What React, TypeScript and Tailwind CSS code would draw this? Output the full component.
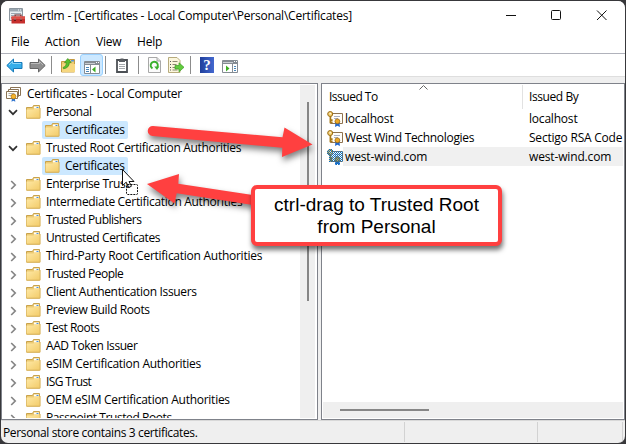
import React from "react";

const tree: { label: string; level: number; state: "open" | "closed" | "leaf"; track: string }[] = [
  { label: "Personal", level: 0, state: "open", track: "tracking-[-0.42px]" },
  { label: "Certificates", level: 1, state: "leaf", track: "tracking-[-0.25px]" },
  { label: "Trusted Root Certification Authorities", level: 0, state: "open", track: "tracking-[-0.335px]" },
  { label: "Certificates", level: 1, state: "leaf", track: "tracking-[-0.25px]" },
  { label: "Enterprise Trust", level: 0, state: "closed", track: "tracking-[-0.4px]" },
  { label: "Intermediate Certification Authorities", level: 0, state: "closed", track: "tracking-[-0.31px]" },
  { label: "Trusted Publishers", level: 0, state: "closed", track: "tracking-[-0.5px]" },
  { label: "Untrusted Certificates", level: 0, state: "closed", track: "tracking-[-0.38px]" },
  { label: "Third-Party Root Certification Authorities", level: 0, state: "closed", track: "tracking-[-0.26px]" },
  { label: "Trusted People", level: 0, state: "closed", track: "tracking-[-0.5px]" },
  { label: "Client Authentication Issuers", level: 0, state: "closed", track: "tracking-[-0.32px]" },
  { label: "Preview Build Roots", level: 0, state: "closed", track: "tracking-[-0.36px]" },
  { label: "Test Roots", level: 0, state: "closed", track: "tracking-[-0.5px]" },
  { label: "AAD Token Issuer", level: 0, state: "closed", track: "tracking-[-0.42px]" },
  { label: "eSIM Certification Authorities", level: 0, state: "closed", track: "tracking-[-0.27px]" },
  { label: "ISG Trust", level: 0, state: "closed", track: "tracking-[-0.6px]" },
  { label: "OEM eSIM Certification Authorities", level: 0, state: "closed", track: "tracking-[-0.27px]" },
  { label: "Passpoint Trusted Roots", level: 0, state: "closed", track: "tracking-[-0.43px]" },
];

const certs = [
  { to: "localhost", by: "localhost", toTrack: "tracking-[-0.2px]", byTrack: "tracking-[-0.2px]" },
  { to: "West Wind Technologies", by: "Sectigo RSA Code", toTrack: "tracking-[-0.32px]", byTrack: "tracking-[-0.22px]" },
  { to: "west-wind.com", by: "west-wind.com", toTrack: "tracking-[-0.15px]", byTrack: "tracking-[-0.15px]" },
];

function Folder() {
  return (
    <svg width="15" height="14" viewBox="0 0 15 14" className="shrink-0">
      <defs>
        <linearGradient id="folder" x1="0" y1="0" x2="1" y2="1">
          <stop offset="0" stopColor="#ffe9a6" />
          <stop offset="1" stopColor="#f2cb68" />
        </linearGradient>
      </defs>
      <path d="M.5 13V2.5h6l1-2h6v12.5z" fill="#eccb75" stroke="#c9a24b" />
      <path d="M8 1.5h5v2H8z" fill="#fff" />
      <path d="M10.5 2h2v1h-2z" fill="#4a90d9" />
      <path d="M.5 13.2V4.5h7l1-1h5.5v9.7z" fill="url(#folder)" />
      <path d="M.5 13.2h13.6V3" fill="none" stroke="#d8b35c" />
    </svg>
  );
}

function Chevron({ open }: { open: boolean }) {
  return (
    <svg width="12" height="12" viewBox="0 0 12 12" className="shrink-0" fill="none" strokeWidth="1.7">
      {open ? <path d="M2 4.2 6 8.2 10 4.2" stroke="#303030" /> : <path d="M4.2 3 8.2 7 4.2 11" stroke="#858585" />}
    </svg>
  );
}

function CertStack() {
  return (
    <svg width="16" height="16" viewBox="0 0 16 16" className="shrink-0">
      <path d="M4.5 1.5h10v8h-10z" fill="#fff" stroke="#8a7354" />
      <path d="M2.5 3.5h10v7h-10z" fill="#fff" stroke="#8a7354" />
      <path d="M.5 5.5h11v7H.5z" fill="#fffdf6" stroke="#8a7354" />
      <path d="M2.5 7.5h6M2.5 9.5h3" stroke="#aaa" />
      <path d="m6 12-.5 3.8 1.900-1 1.900 1L8.800 12z" fill="#2f74cf" />
      <circle cx="7.500" cy="10.500" r="2.400" fill="#f5b32b" stroke="#b77b12" strokeWidth=".8" />
    </svg>
  );
}

function CertKey({ dim = false }: { dim?: boolean }) {
  return (
    <svg width="16" height="16" viewBox="0 0 16 16" className="shrink-0">
      <defs>
        <pattern id="dither" width="2" height="2" patternUnits="userSpaceOnUse">
          <path d="M0 0h1v1H0zM1 1h1v1H1z" fill="#0b70c0" />
        </pattern>
      </defs>
      <path d="M3.5 2.5h12v10h-12z" fill="#fffdf8" stroke="#8f7350" />
      <path d="M7 5.5h6M7 7.5h4" stroke="#aab0c4" />
      <path d="m8.5 11-.5 5 2.4-1.3L13 16l-.7-5z" fill="#2468cc" />
      <circle cx="10.4" cy="10.3" r="2.4" fill="#eda824" stroke="#9d6a10" strokeWidth=".8" />
      <path d="M3.4 4v8.2M3.4 9.2h2.2M3.4 11.4h2.2" stroke="#a87818" strokeWidth="1.7" fill="none" />
      <circle cx="3.2" cy="3" r="2.5" fill="#f4cf70" stroke="#9a6d19" />
      <path d="M2.6 2h1.2v1.2H2.6z" fill="#fff" />
      {dim && <path d="M1 0h4v1h1v1h10v11h-3v3H8v-3H2V6H0V1h1z" fill="url(#dither)" />}
    </svg>
  );
}

function AppIcon() {
  return (
    <svg width="16" height="16" viewBox="0 0 16 16" className="shrink-0">
      <path d="M.5.5h13v12H.5z" fill="#e8eef3" stroke="#8b969f" />
      <path d="M1 1h12v2.5H1z" fill="#9aa7b1" />
      <path d="M9 2h1M11 2h1" stroke="#fff" />
      <path d="M2 5.5h10M2 7.5h3M2 9.5h1" stroke="#9aa7b1" />
      <path d="M6 8.500V7h6v1.500" fill="none" stroke="#6c2020" strokeWidth="1.2" />
      <path d="M2.500 8.500H16v7H2.500z" fill="#c62f2d" />
      <path d="M2.500 8.500H16V11H2.500z" fill="#dd5048" />
      <path d="M5 10.500h2V13H5zM11 10.500h2V13h-2z" fill="#701717" />
      <path d="M5.500 10.500h1v1h-1zM11.500 10.500h1v1h-1z" fill="#fff" />
    </svg>
  );
}

function ArrowIcon({ back = false }: { back?: boolean }) {
  return (
    <svg width="17" height="15" viewBox="0 0 17 15" className="shrink-0">
      {back ? (
        <>
          <path d="M.8 7.5 7.5 1v3.5H16v6H7.5V14z" fill="#35aeea" stroke="#1779b8" />
          <path d="M3 7 6.5 3.5v2H15" fill="none" stroke="#8bd6f8" />
        </>
      ) : (
        <>
          <path d="M16.2 7.5 9.5 1v3.5H1v6h8.5V14z" fill="#8e8e8e" stroke="#666" />
          <path d="M2 5.5h8.5v-2L14 7" fill="none" stroke="#bababa" />
        </>
      )}
    </svg>
  );
}

function UpFolder() {
  return (
    <svg width="15" height="16" viewBox="0 0 15 16" className="shrink-0">
      <path d="M.5 15V4.500h7l1-2h5V15z" fill="#edcb72" stroke="#c49b43" />
      <path d="M1 7h13v8H1z" fill="#f6d780" />
      <path d="M10 3h3v1.500h-3z" fill="#5798d6" />
      <path d="M2 10.500C4.500 9.500 5.300 8 5.300 5.500H3.500L6.800 1.500l3.400 4H8.300c0 3.500-2 5.800-5.800 6.300z" fill="#58c02e" stroke="#3b8f1d" strokeWidth=".7" />
    </svg>
  );
}

function PaneIcon({ right = false }: { right?: boolean }) {
  return (
    <svg width="16" height="13" viewBox="0 0 16 13" className="shrink-0">
      <path d="M.5.5h15v12H.5z" fill="#fff" stroke="#858c93" />
      <path d="M1 1h14v3H1z" fill="#858c93" />
      <path d="M1 2.5h10" stroke="#c9cdd1" />
      <path d="M12 1.5h1M14 1.5h1" stroke="#fff" />
      {right ? (
        <>
          <path d="M10.5 4v8" stroke="#858c93" />
          <path d="M12 6.5h2M12 8.5h2M12 10.5h2" stroke="#4a87b8" />
          <path d="M4 5.5v6L7.5 8.5z" fill="#3cae20" />
        </>
      ) : (
        <>
          <path d="M6.5 4v8" stroke="#858c93" />
          <path d="M2 6.5h3M2 8.5h3M2 10.5h3" stroke="#4a87b8" />
          <path d="M11.5 5.5v6L8 8.5z" fill="#3cae20" />
        </>
      )}
    </svg>
  );
}

function Clipboard() {
  return (
    <svg width="12" height="15" viewBox="0 0 12 15" className="shrink-0">
      <path d="M1 2h10v12H1z" fill="#fff" stroke="#4c5055" strokeWidth="1.8" />
      <path d="M3 2h1.5V.5h3V2H9v2H3z" fill="#5a5e63" />
      <path d="M3 6.5h6M3 8.5h6M3 10.5h6" stroke="#a5a9ad" />
    </svg>
  );
}

function Refresh() {
  return (
    <svg width="13" height="16" viewBox="0 0 13 16" className="shrink-0">
      <path d="M.5.5h8.5l3.5 3.5v11.5H.5z" fill="#fbfbfb" stroke="#a8a8a8" />
      <path d="M9 .5V4h3.5" fill="#ddd" stroke="#a8a8a8" />
      <path d="M4.5 11.3A3.5 3.5 0 1 1 9.3 10" fill="none" stroke="#39b02d" strokeWidth="2" />
      <path d="M6.3 9.4h5L9 12.9z" fill="#39b02d" />
    </svg>
  );
}

function Export() {
  return (
    <svg width="17" height="16" viewBox="0 0 17 16" className="shrink-0">
      <path d="M.5.5H9l3 3v12H.5z" fill="#fbf6dc" stroke="#b7ab7d" />
      <path d="M2 4.5h1M2 7.5h1M2 10.5h1M2 13h1" stroke="#555" />
      <path d="M4.5 4.5h5M4.5 7.5h4M4.5 10.5h3M4.5 13h5" stroke="#8c8870" />
      <path d="M7 8.5h4V5.800l5 4.500-5 4.500V12H7z" fill="#62cb3e" stroke="#3b9d22" strokeWidth=".7" />
    </svg>
  );
}

function Separator({ className = "" }: { className?: string }) {
  return <div className={"h-[18px] w-px shrink-0 bg-[#8c8c8c] " + className} />;
}

export default function App() {
  return (
    <div className="relative h-[444px] w-[626px] overflow-hidden bg-[#38383b] p-px font-['Open_Sans','Noto_Sans',sans-serif] text-[12px] leading-[18px] text-black">
      <div className="flex h-[442px] w-[624px] flex-col overflow-hidden rounded-[7px] bg-[#efefef]">
        <header className="flex h-[28px] shrink-0 items-center bg-white pl-2">
          <div className="pt-[1px]"><AppIcon /></div>
          <h1 className="ml-[5px] mt-[2px] whitespace-nowrap tracking-[-0.22px]">certlm - [Certificates - Local Computer\Personal\Certificates]</h1>
          <svg width="104" height="12" viewBox="0 0 104 12" className="ml-auto mr-[16px] shrink-0" fill="none" stroke="#111">
            <path d="M1 6.5h10" />
            <rect x="46.5" y="1.5" width="9" height="9" rx="1" />
            <path d="M92 1.5l9.500 9.500M101.500 1.500 92 11" />
          </svg>
        </header>
        <nav className="flex h-[25px] shrink-0 items-center border-b border-[#b0b2bb] bg-white pl-[10px] pt-[1px]">
          <span className="w-[34px] tracking-[-0.2px]">File</span>
          <span className="w-[51px]">Action</span>
          <span className="w-[41px] tracking-[-0.2px]">View</span>
          <span className="tracking-[-0.2px]">Help</span>
        </nav>
        <div className="flex h-[23px] shrink-0 items-center border-b border-[#dedede] bg-white pl-[5px]">
          <ArrowIcon back />
          <div className="ml-[6px] flex"><ArrowIcon /></div>
          <Separator className="ml-[5px]" />
          <div className="ml-[9px]"><UpFolder /></div>
          <div className="ml-1 flex h-[22px] w-[23px] items-center justify-center rounded-[3px] border border-[#99d1ff] bg-[#cce8ff] pt-[4px]"><PaneIcon /></div>
          <Separator className="ml-[2px]" />
          <div className="ml-[10px]"><Clipboard /></div>
          <Separator className="ml-[10px]" />
          <div className="ml-[9px]"><Refresh /></div>
          <div className="ml-[7px]"><Export /></div>
          <Separator className="ml-[5px]" />
          <div className="ml-[9px] flex h-[16px] w-[14px] items-center justify-center bg-gradient-to-r from-[#1f3f9c] to-[#4468cf] font-['Liberation_Serif',serif] text-[15px] font-bold text-white">?</div>
          <div className="ml-[8px] pt-[2px]"><PaneIcon right /></div>
        </div>

        <main className="mt-[6px] flex h-[337px] shrink-0">
          <section className="flex h-[337px] w-[317px] shrink-0 border border-[#7f828a] bg-white p-px">
            <div className="h-[333px] w-[297px] shrink-0 overflow-hidden">
              <div className="flex h-[18px] items-center pl-[3px]">
                <CertStack />
                <span className="ml-[5px] tracking-[-0.22px]">Certificates - Local Computer</span>
              </div>
              {tree.map((n, i) => (
                <div key={i} className={"flex h-[18px] items-center " + (n.level ? "pl-[39px]" : "pl-[4px]")}>
                  {n.state !== "leaf" && <Chevron open={n.state === "open"} />}
                  <div className={"flex h-[18px] items-center whitespace-nowrap " + (n.level ? "w-[86px] rounded-[2px] bg-[#cce8ff] pl-[3px]" : "pl-[7px]")}>
                    <Folder />
                    <span className={"ml-[5px] " + n.track}>{n.label}</span>
                  </div>
                </div>
              ))}
            </div>
            <div className="h-[333px] w-[15px] shrink-0 bg-[#efefef] pl-[7px] pt-[17px]">
              <div className="h-[199px] w-[2px] bg-[#868686]" />
            </div>
          </section>

          <section className="ml-[3px] flex h-[337px] w-[304px] flex-col border border-[#7f828a] bg-white p-px">
            <div className="relative flex h-[24px] shrink-0 items-center">
              <span className="w-[199px] pl-[6px] tracking-[-0.5px]">Issued To</span>
              <span className="flex h-[24px] items-center border-l border-[#e2e2e2] pl-[6px] tracking-[-0.42px]">Issued By</span>
              <svg width="9" height="5" viewBox="0 0 9 5" className="absolute left-[96px] top-0" fill="none" stroke="#666"><path d="M.5 4.500l4-4 4 4" /></svg>
            </div>
            {certs.map((c, i) => (
              <div key={c.to} className="flex h-[19px] shrink-0 items-center overflow-hidden whitespace-nowrap pl-[4px]">
                <CertKey dim={i === 2} />
                <div className={"flex h-[19px] w-[280px] items-center pl-[2px] " + (i === 2 ? "bg-[#f0f0f0]" : "")}>
                  <span className={"w-[184px] shrink-0 " + c.toTrack}>{c.to}</span>
                  <span className={c.byTrack}>{c.by}</span>
                </div>
              </div>
            ))}
            <div className="mt-auto h-[16px] w-[300px] shrink-0 bg-[#efefef] pl-[17px] pt-[7px]">
              <div className="h-[2px] w-[89px] bg-[#868686]" />
            </div>
          </section>
        </main>

        <footer className="flex flex-1 items-center border-t border-[#d8d8d8] pl-[2px]">
          <span className="w-[401px] pt-[2px] tracking-[-0.36px]">Personal store contains 3 certificates.</span>
          <div className="h-[20px] w-[133px] border-l border-[#d2d2d2]" />
          <div className="h-[20px] w-[86px] border-x border-[#d2d2d2]" />
        </footer>
      </div>

      <svg width="626" height="444" viewBox="0 0 626 444" className="absolute left-0 top-0">
        <g fill="#ff4040" className="drop-shadow-[1px_4px_3px_rgba(0,0,0,0.5)]">
          <path d="M153 126 282.5 137.3 284.5 127.5 312.5 144.5 282 157 282.3 147.7 152.5 136A5 5 0 0 1 153 126z" />
          <path d="M147 184 179 174 178.3 183.7 256 195.5V205.5L176.7 193.3 174.5 203.5z" />
        </g>
        <path d="M122.5 169.5V185.500l3.700-3.300 2.600 5.300 2.700-1.300-2.500-4.700h5z" fill="#fff" stroke="#111" />
        <rect x="126.5" y="184.5" width="11" height="10" rx="1" fill="none" stroke="#111" strokeDasharray="2 1" />
      </svg>
      <div className="absolute left-[251px] top-[185px] flex h-[61px] w-[251px] flex-col items-center rounded-[6px] border-4 border-[#ff4040] bg-white pt-[5px] font-['Liberation_Sans',Arial,sans-serif] text-[19px] leading-[22px] shadow-[1px_4px_5px_rgba(0,0,0,0.55)]">
        <span className="whitespace-nowrap">ctrl-drag to Trusted Root</span>
        <span>from Personal</span>
      </div>
    </div>
  );
}
